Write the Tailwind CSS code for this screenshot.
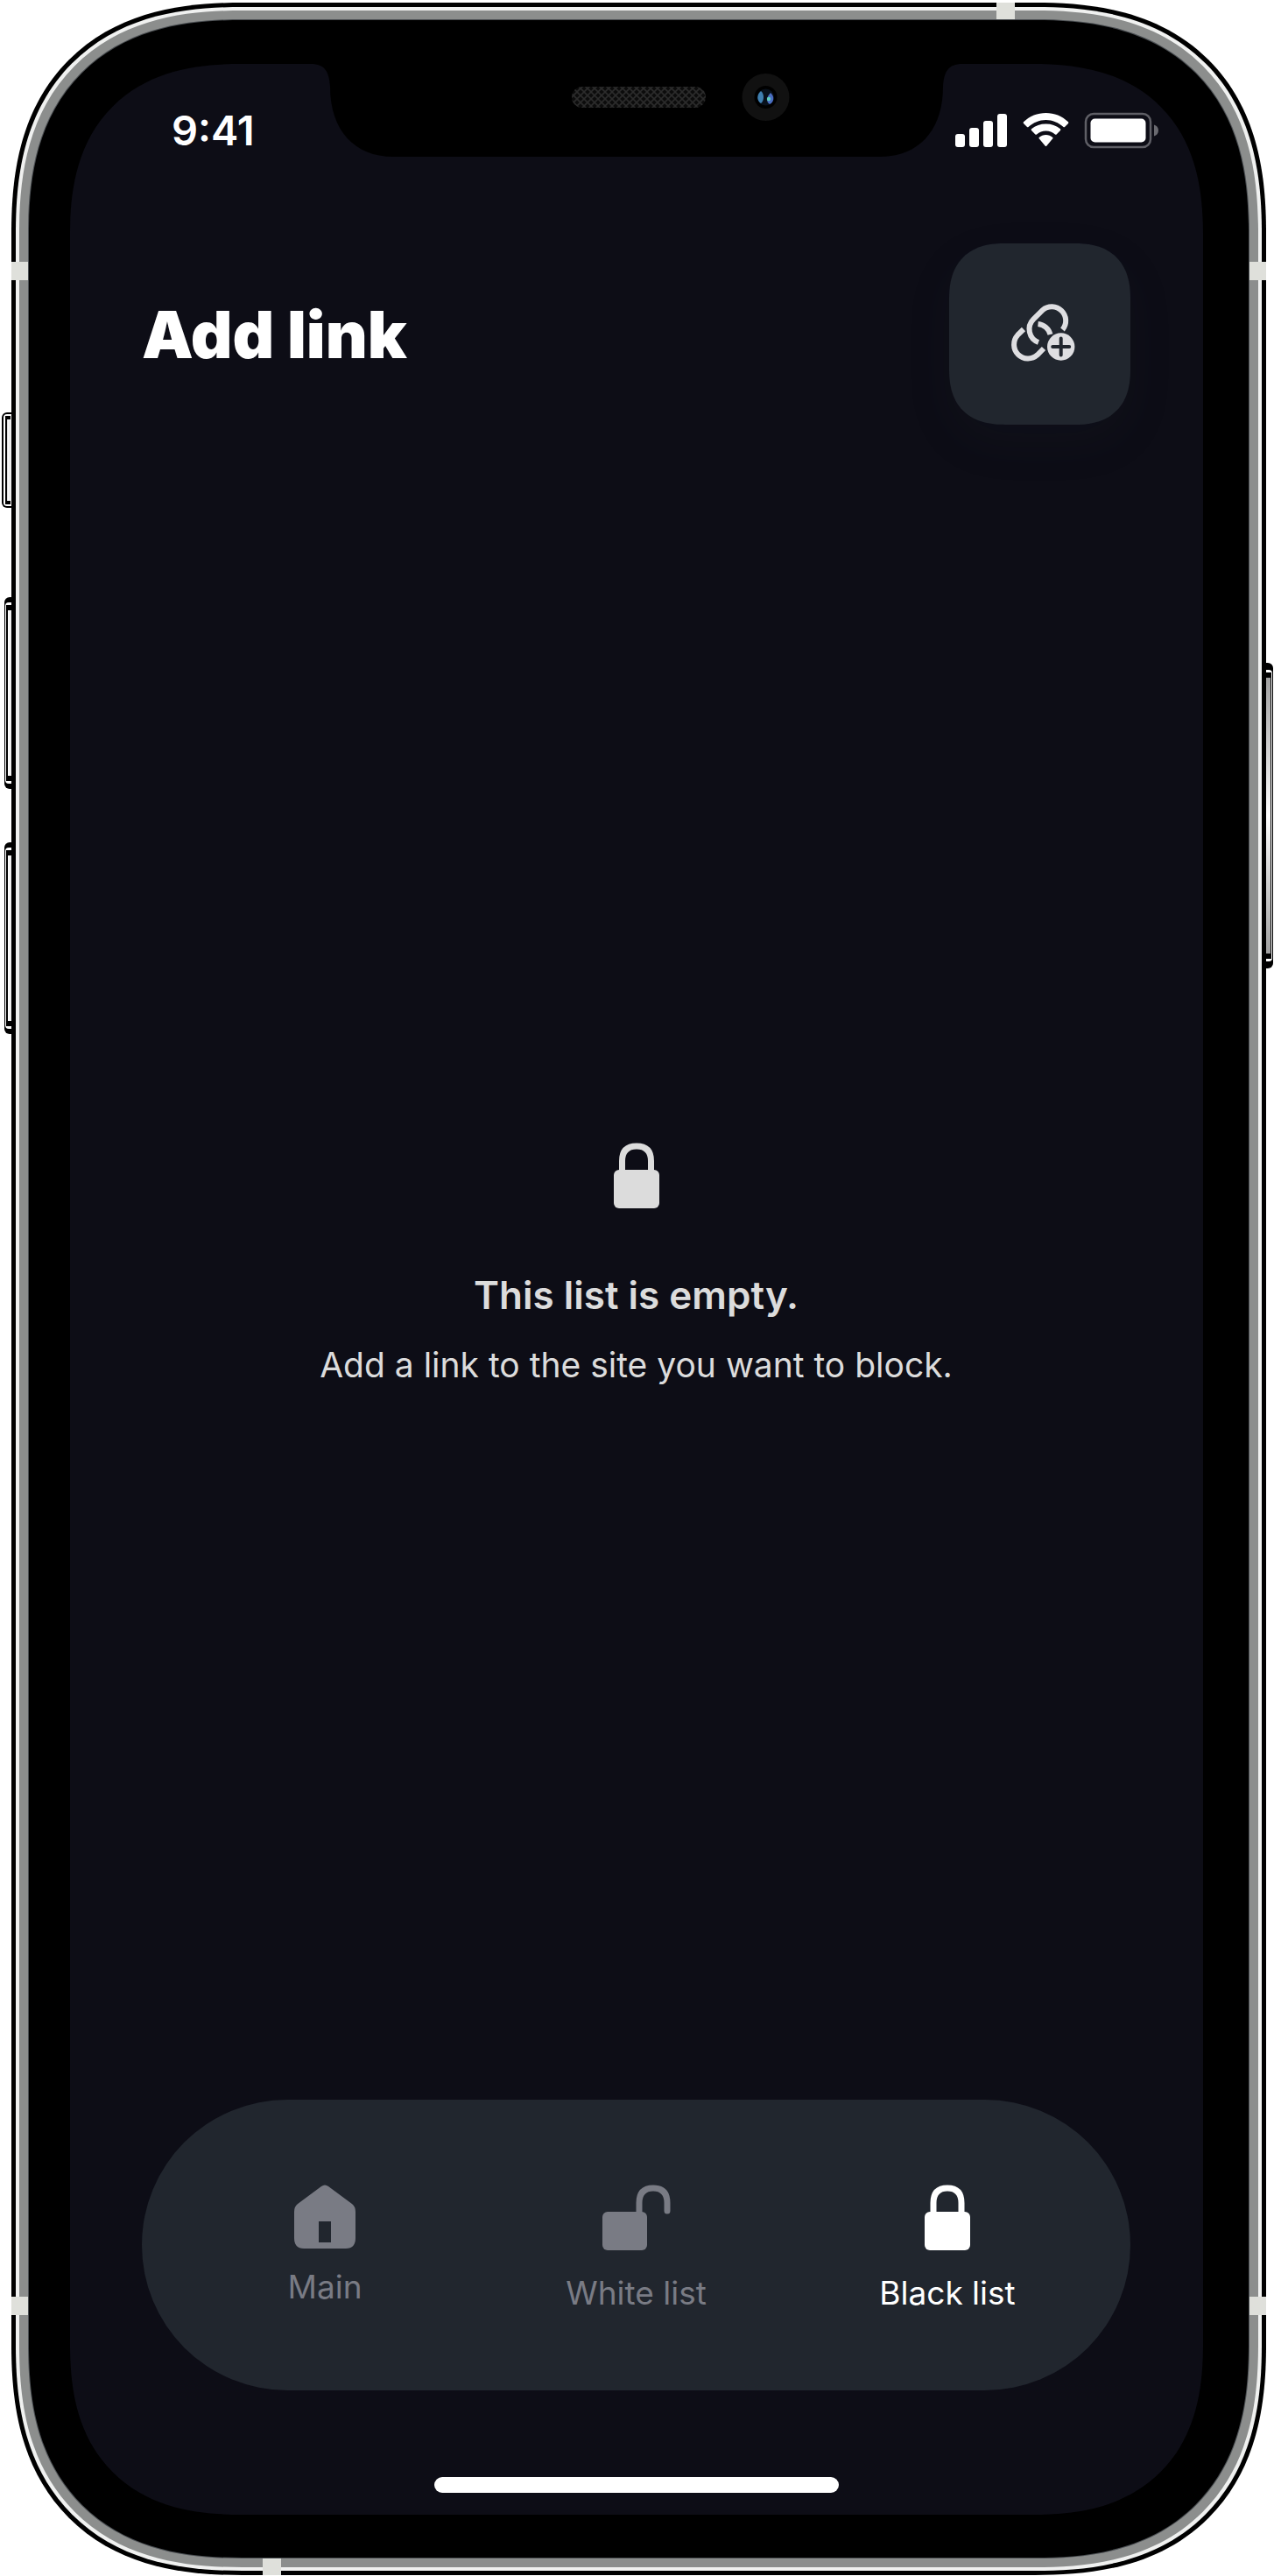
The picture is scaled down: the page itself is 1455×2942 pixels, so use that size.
<!DOCTYPE html>
<html lang="en">
<head>
<meta charset="utf-8">
<meta name="viewport" content="width=device-width, initial-scale=1">
<title>Add link</title>
<script src="https://cdn.jsdelivr.net/npm/@tailwindcss/browser@4"></script>
</head>
<body class="bg-white font-['Inter',sans-serif]">
<div class="relative min-h-screen flex pl-[13px] pr-[9px] pt-[3px] pb-px">

  <!-- side buttons -->
  <div class="absolute left-[2px] top-[471px] w-[14px] h-[109px] rounded-l-md bg-black p-[2px]"><div class="h-full rounded-l-sm bg-white p-[2px]"><div class="h-full bg-gradient-to-r from-neutral-300 via-white to-neutral-300 border-y-4 border-l-2 border-black"></div></div></div>
  <div class="absolute left-[5px] top-[682px] w-[12px] h-[219px] rounded-l-md bg-black pl-px py-[6px]"><div class="h-full rounded-l-sm bg-white py-[3px] pl-px"><div class="h-full bg-gradient-to-r from-white to-neutral-300 border-y-6 border-l-2 border-black"></div></div></div>
  <div class="absolute left-[5px] top-[962px] w-[12px] h-[219px] rounded-l-md bg-black pl-px py-[6px]"><div class="h-full rounded-l-sm bg-white py-[3px] pl-px"><div class="h-full bg-gradient-to-r from-white to-neutral-300 border-y-6 border-l-2 border-black"></div></div></div>
  <div class="absolute right-[1px] top-[757px] w-[12px] h-[349px] rounded-r-md bg-black pr-px py-[8px]"><div class="h-full rounded-r-sm bg-white py-[3px] pr-px"><div class="h-full bg-gradient-to-b from-neutral-400 via-white to-neutral-400 border-y-6 border-r border-black"></div></div></div>

  <!-- device frame, outermost layer first -->
  <div class="relative flex flex-1 bg-black p-[5px] rounded-[264px] [corner-shape:superellipse(1.28)]">
   <div class="flex flex-1 bg-[#f0f1f0] p-[4px] rounded-[259px] [corner-shape:superellipse(1.28)]">
    <div class="flex flex-1 bg-[#8c8e8d] p-[10px] rounded-[255px] [corner-shape:superellipse(1.28)]">
     <div class="flex flex-1 bg-[#4c5054] p-px rounded-[245px] [corner-shape:superellipse(1.28)]">
      <div class="flex flex-1 bg-black pl-[47px] pr-[52px] pt-[50px] pb-[49px] rounded-[244px] [corner-shape:superellipse(1.28)]">
       <div class="relative flex flex-1 flex-col bg-[#0d0d16] pl-[82px] pr-[83px] rounded-[196px] [corner-shape:superellipse(1.28)]">

        <!-- notch -->
        <svg class="absolute top-0 left-1/2 -translate-x-1/2" width="744" height="107" viewBox="0 0 744 107" aria-hidden="true">
          <defs>
            <pattern id="mesh" width="8" height="8" patternUnits="userSpaceOnUse"><path d="M0 0L8 8M8 0L0 8" stroke="#2b2b2b" stroke-width="1.6"/></pattern>
          </defs>
          <path d="M0 0C16 0 21 9 22 26C22 76 50 106 94 106H650C694 106 722 76 722 26C723 9 728 0 744 0Z" fill="#000"/>
          <rect x="298" y="26" width="153" height="24" rx="12" fill="#0c0c0c"/>
          <rect x="298" y="26" width="153" height="24" rx="12" fill="url(#mesh)"/>
          <circle cx="519.500" cy="38" r="27" fill="#111"/>
          <circle cx="519.500" cy="38" r="13" fill="#000"/>
          <circle cx="519.500" cy="38" r="9.500" fill="#08111c"/>
          <path d="M514 31C509 35 509 42 514 45C518 42 518 34 514 31Z" fill="#3f7fb0"/>
          <path d="M525 33C530 37 529 44 524 46C520 44 520 38 525 33Z" fill="#4a6cc0"/>
          <circle cx="523" cy="40" r="2.200" fill="#5fd0c0"/>
        </svg>

        <!-- status bar -->
        <div class="flex items-center justify-between pt-[44px] pl-[34px]">
          <time class="text-[47px] leading-[64px] font-semibold text-white">9:41</time>
          <svg class="-mr-[33px]" width="234" height="42" viewBox="0 0 234 42" fill="#fff" aria-label="Signal, Wi-Fi and battery">
            <rect x="1" y="25" width="11" height="15" rx="3"/>
            <rect x="17" y="18" width="11" height="22" rx="3"/>
            <rect x="33" y="10" width="11" height="30" rx="3"/>
            <rect x="49" y="2" width="11" height="38" rx="3"/>
            <path d="M104.500 9C112 9 119 12 124.500 17Q125.200 17.600 126 17L130 13Q130.800 12 130 11.300C123 4.500 114 1 104.500 1S86 4.500 79 11.300Q78.200 12 79 13L83 17Q83.800 17.600 84.500 17C90 12 97 9 104.500 9Z"/>
            <path d="M104.500 21.500C108.500 21.500 112 23 115 25.500Q115.800 26.200 116.600 25.500L121 21Q121.800 20 121 19.300C116.500 15.300 110.700 13.500 104.500 13.500S92.500 15.300 88 19.300Q87.200 20 88 21L92.400 25.500Q93.200 26.200 94 25.500C97 23 100.500 21.500 104.500 21.500Z"/>
            <path d="M112.300 30.300Q113 29.600 112.300 28.900C110 27 107.400 26 104.500 26S99 27 96.700 28.900Q96 29.600 96.700 30.300L103.800 38.700Q104.500 39.400 105.200 38.700Z"/>
            <rect x="150" y="2" width="74" height="38" rx="9" fill="none" stroke="#5f5f66" stroke-width="2.500"/>
            <rect x="155.500" y="7.500" width="63" height="27" rx="5"/>
            <path d="M228 14.500V27.500C231 26.500 233 24.500 233 21S231 15.500 228 14.500Z" fill="#6a6a70"/>
          </svg>
        </div>

        <!-- header -->
        <header class="mt-[97px] flex items-center justify-between">
          <h1 class="text-[74px] leading-[92px] font-black text-white">Add link</h1>
          <button type="button" aria-label="Add link" class="size-[207px] flex items-center justify-center bg-[#21262e] rounded-[64px] [corner-shape:superellipse(1.28)] shadow-[0_20px_50px_rgba(33,38,46,0.12)]">
            <svg width="83" height="71" viewBox="-4 0 83 71" fill="none" stroke="#dedee1" stroke-width="6" aria-hidden="true">
              <path d="M19 30L12.200 36.700A16 16 0 0 0 34.800 59.300L42 52"/>
              <path d="M36 45A16 16 0 0 1 30.200 18.700L40.700 8.200A16 16 0 0 1 63.500 30.500"/>
              <path d="M35.500 24A16 16 0 0 1 49.500 36"/>
              <circle cx="61.700" cy="50" r="15.700" fill="#dedee1" stroke="none"/>
              <path d="M61.700 40.500V59.500M52.200 50H71.200" stroke="#21262e" stroke-width="4" stroke-linecap="round"/>
            </svg>
          </button>
        </header>

        <!-- empty state -->
        <main class="flex-1 flex flex-col items-center justify-center text-center text-[#dcdcdc] pt-[8px]">
          <svg width="52" height="76" viewBox="0 0 52 76" aria-hidden="true">
            <path d="M9.500 36V21Q9.500 4 26 4T42.500 21V36" fill="none" stroke="currentColor" stroke-width="7"/>
            <rect y="31" width="52" height="44" rx="6" fill="currentColor"/>
          </svg>
          <h2 class="mt-[66px] text-[44px] leading-[64px] font-semibold">This list is empty.</h2>
          <p class="mt-[20px] text-[39px] leading-[56px]">Add a link to the site you want to block.</p>
        </main>

        <!-- tab bar -->
        <nav class="h-[332px] flex items-start justify-between rounded-full bg-[#21262e] px-[99px] pt-[97px] text-[37px] leading-[48px] text-[#797b84]">
          <a href="#main" class="w-[220px] flex flex-col items-center gap-[20px]">
            <svg width="70" height="73" viewBox="0 0 70 73" aria-hidden="true">
              <path fill="currentColor" fill-rule="evenodd" d="M31 2Q35-1 39 2L66 22Q70 25 70 31V61Q70 73 59 73H11Q0 73 0 61V31Q0 25 4 22ZM28 42V66H42V42Z"/>
            </svg>
            Main
          </a>
          <a href="#white-list" class="w-[220px] flex flex-col items-center gap-[24px]">
            <svg width="78" height="76" viewBox="0 0 78 76" aria-hidden="true">
              <path d="M42 36V21Q42 4 58 4T74 21V30" fill="none" stroke="currentColor" stroke-width="7" stroke-linecap="round"/>
              <rect y="31" width="51" height="44" rx="6" fill="currentColor"/>
            </svg>
            White list
          </a>
          <a href="#black-list" aria-current="page" class="w-[220px] flex flex-col items-center gap-[24px] text-white">
            <svg width="52" height="76" viewBox="0 0 52 76" aria-hidden="true">
              <path d="M10 36V21Q10 4 26 4T42 21V36" fill="none" stroke="currentColor" stroke-width="7"/>
              <rect y="31" width="52" height="44" rx="6" fill="currentColor"/>
            </svg>
            Black list
          </a>
        </nav>

        <!-- home indicator -->
        <div class="mt-[99px] mb-[25px] mx-auto w-[462px] h-[18px] rounded-full bg-white"></div>
       </div>
      </div>
     </div>
    </div>
   </div>

   <!-- antenna bands -->
   <i class="absolute left-0 top-[296px] w-[19px] h-[21px] bg-[#dfe0db]"></i>
   <i class="absolute right-0 top-[296px] w-[19px] h-[21px] bg-[#dfe0db]"></i>
   <i class="absolute left-0 bottom-[297px] w-[19px] h-[21px] bg-[#dfe0db]"></i>
   <i class="absolute right-0 bottom-[297px] w-[19px] h-[21px] bg-[#dfe0db]"></i>
   <i class="absolute right-[287px] top-0 w-[21px] h-[19px] bg-[#dfe0db]"></i>
   <i class="absolute left-[287px] bottom-0 w-[21px] h-[19px] bg-[#dfe0db]"></i>
  </div>
</div>
</body>
</html>
